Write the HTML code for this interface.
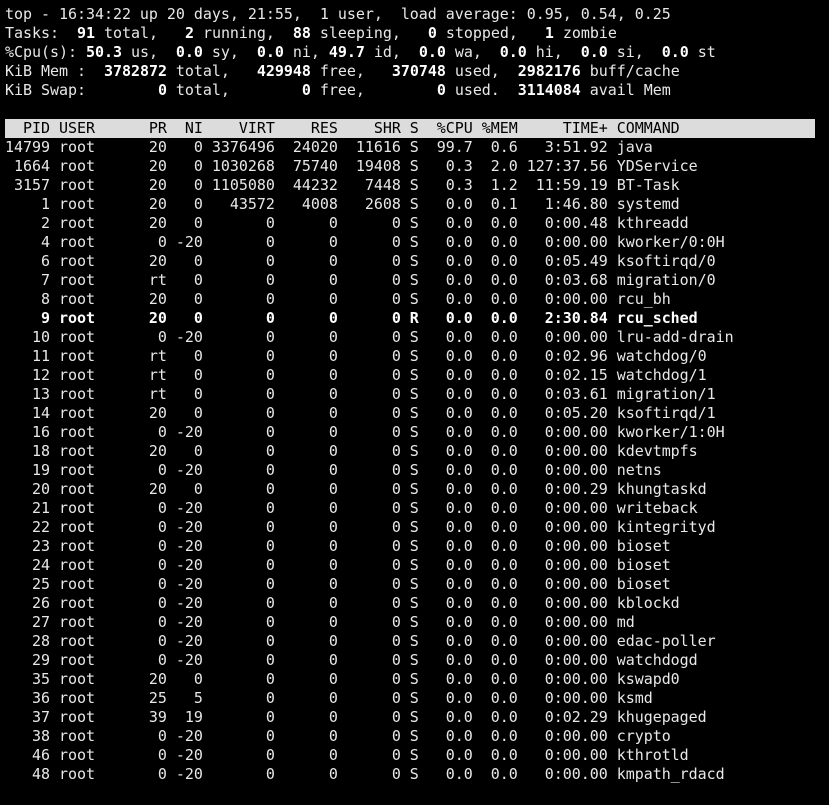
<!DOCTYPE html>
<html><head><meta charset="utf-8"><style>
html,body{margin:0;padding:0;background:#000;}
body{width:829px;height:805px;overflow:hidden;}
pre{margin:0;padding:5px 0 0 5px;font-family:"DejaVu Sans Mono","Liberation Mono",monospace;font-size:15px;letter-spacing:-0.035px;line-height:19px;color:#e8e8e8;}
b{color:#fff;font-weight:bold;}
.h{display:inline-block;width:810px;background:#dcdcdc;color:#000;}
</style></head><body><pre>top - 16:34:22 up 20 days, 21:55,  1 user,  load average: 0.95, 0.54, 0.25
Tasks: <b> 91</b> total, <b>  2</b> running, <b> 88</b> sleeping, <b>  0</b> stopped, <b>  1</b> zombie
%Cpu(s): <b>50.3</b> us, <b> 0.0</b> sy, <b> 0.0</b> ni, <b>49.7</b> id, <b> 0.0</b> wa, <b> 0.0</b> hi, <b> 0.0</b> si, <b> 0.0</b> st
KiB Mem : <b> 3782872</b> total, <b>  429948</b> free, <b>  370748</b> used, <b> 2982176</b> buff/cache
KiB Swap: <b>       0</b> total, <b>       0</b> free, <b>       0</b> used. <b> 3114084</b> avail Mem

<span class="h">  PID USER      PR  NI    VIRT    RES    SHR S  %CPU %MEM     TIME+ COMMAND</span>
14799 root      20   0 3376496  24020  11616 S  99.7  0.6   3:51.92 java
 1664 root      20   0 1030268  75740  19408 S   0.3  2.0 127:37.56 YDService
 3157 root      20   0 1105080  44232   7448 S   0.3  1.2  11:59.19 BT-Task
    1 root      20   0   43572   4008   2608 S   0.0  0.1   1:46.80 systemd
    2 root      20   0       0      0      0 S   0.0  0.0   0:00.48 kthreadd
    4 root       0 -20       0      0      0 S   0.0  0.0   0:00.00 kworker/0:0H
    6 root      20   0       0      0      0 S   0.0  0.0   0:05.49 ksoftirqd/0
    7 root      rt   0       0      0      0 S   0.0  0.0   0:03.68 migration/0
    8 root      20   0       0      0      0 S   0.0  0.0   0:00.00 rcu_bh
<b>    9 root      20   0       0      0      0 R   0.0  0.0   2:30.84 rcu_sched</b>
   10 root       0 -20       0      0      0 S   0.0  0.0   0:00.00 lru-add-drain
   11 root      rt   0       0      0      0 S   0.0  0.0   0:02.96 watchdog/0
   12 root      rt   0       0      0      0 S   0.0  0.0   0:02.15 watchdog/1
   13 root      rt   0       0      0      0 S   0.0  0.0   0:03.61 migration/1
   14 root      20   0       0      0      0 S   0.0  0.0   0:05.20 ksoftirqd/1
   16 root       0 -20       0      0      0 S   0.0  0.0   0:00.00 kworker/1:0H
   18 root      20   0       0      0      0 S   0.0  0.0   0:00.00 kdevtmpfs
   19 root       0 -20       0      0      0 S   0.0  0.0   0:00.00 netns
   20 root      20   0       0      0      0 S   0.0  0.0   0:00.29 khungtaskd
   21 root       0 -20       0      0      0 S   0.0  0.0   0:00.00 writeback
   22 root       0 -20       0      0      0 S   0.0  0.0   0:00.00 kintegrityd
   23 root       0 -20       0      0      0 S   0.0  0.0   0:00.00 bioset
   24 root       0 -20       0      0      0 S   0.0  0.0   0:00.00 bioset
   25 root       0 -20       0      0      0 S   0.0  0.0   0:00.00 bioset
   26 root       0 -20       0      0      0 S   0.0  0.0   0:00.00 kblockd
   27 root       0 -20       0      0      0 S   0.0  0.0   0:00.00 md
   28 root       0 -20       0      0      0 S   0.0  0.0   0:00.00 edac-poller
   29 root       0 -20       0      0      0 S   0.0  0.0   0:00.00 watchdogd
   35 root      20   0       0      0      0 S   0.0  0.0   0:00.00 kswapd0
   36 root      25   5       0      0      0 S   0.0  0.0   0:00.00 ksmd
   37 root      39  19       0      0      0 S   0.0  0.0   0:02.29 khugepaged
   38 root       0 -20       0      0      0 S   0.0  0.0   0:00.00 crypto
   46 root       0 -20       0      0      0 S   0.0  0.0   0:00.00 kthrotld
   48 root       0 -20       0      0      0 S   0.0  0.0   0:00.00 kmpath_rdacd</pre></body></html>
